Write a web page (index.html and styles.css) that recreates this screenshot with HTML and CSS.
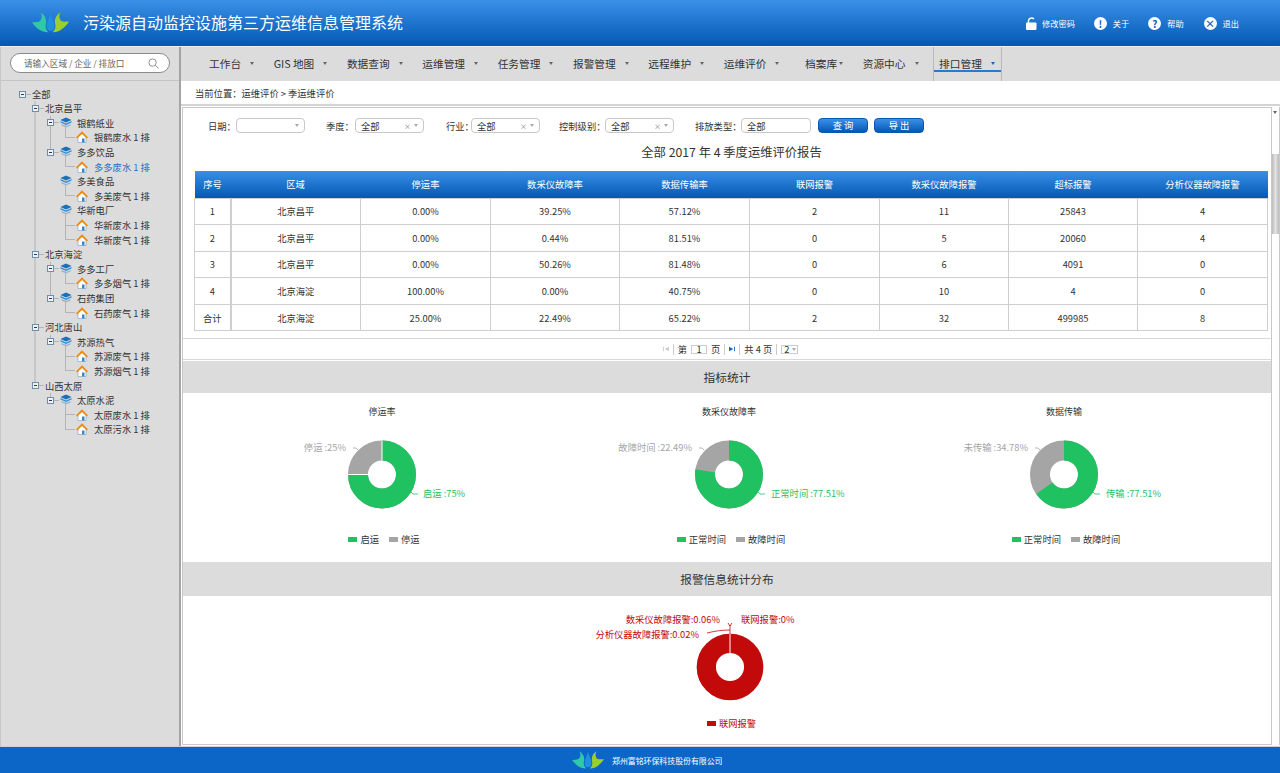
FILE: index.html
```html
<!DOCTYPE html>
<html lang="zh-CN">
<head>
  <meta charset="UTF-8">
  <title>污染源自动监控设施第三方运维信息管理系统</title>
  <link rel="stylesheet" href="styles.css">
</head>
<body>

  <!-- Shared icons -->
  <svg class="defs" width="0" height="0">
    <symbol id="logo" viewBox="0 0 37 20">
      <path fill="#2fc9a6" d="M0 10C4 9.500 7.500 10 9 7C10.500 4 9.500 1.500 8.500 0C13 2.500 15 7 13.800 12C13 15.500 14.500 18 16.500 19.800C9.500 20 4 15.500 0 10Z"/>
      <path fill="#1f8fe0" d="M18.500 0.500C20 6.500 23.500 10.500 22.300 15.500C21.400 19.500 15.600 19.500 14.800 15.500C13.800 10.500 17 6.500 18.500 0.500Z"/>
      <path fill="#9ad02e" d="M37 9C33 9 29.500 10 28 7C26.500 4 27.500 1.500 28.500 0C24 2.500 22 7 23.300 12C24 15.500 22.500 18 20.500 19.800C27.500 20 33 15 37 9Z"/>
    </symbol>
    <symbol id="company" viewBox="0 0 12 12">
      <path fill="#1d6fb8" d="M6 0.500L11.500 3L6 5.500L0.500 3Z"/>
      <path fill="#2f8fd6" d="M0.500 4L6 6.500L11.500 4V5.500L6 8L0.500 5.500Z"/>
      <path fill="#8fb8d8" d="M1.500 7L6 9L10.500 7V8.500L6 10.500L1.500 8.500Z"/>
    </symbol>
    <symbol id="house" viewBox="0 0 12 12">
      <path fill="#fff" stroke="#6f9fc8" stroke-width=".6" d="M2 6V11.500H10V6L6 2.500Z"/>
      <path fill="none" stroke="#f08a10" stroke-width="1.800" d="M0.600 6.800L6 1.500L11.400 6.800"/>
      <rect x="6" y="7.500" width="2.500" height="4" fill="#3d86c6"/>
    </symbol>
  </svg>

  <!-- Header -->
  <header class="top-bar">
    <svg class="logo"><use href="#logo"/></svg>
    <h1>污染源自动监控设施第三方运维信息管理系统</h1>
    <div class="top-links">
      <a class="top-link">
        <svg class="lock" viewBox="0 0 11 13">
          <path fill="none" stroke="#fff" stroke-width="1.400" d="M2.500 6V3.500C2.500 1.500 6 0 8 2"/>
          <rect y="5.500" width="10.500" height="7.500" rx="1" fill="#fff"/>
        </svg>
        修改密码
      </a>
      <a class="top-link"><span class="round-icon">!</span>关于</a>
      <a class="top-link"><span class="round-icon">?</span>帮助</a>
      <a class="top-link"><span class="round-icon">×</span>退出</a>
    </div>
  </header>

  <div class="body-wrap">

    <!-- Left tree -->
    <aside class="side">
      <div class="search-row">
        <div class="search-box">
          <span>请输入区域 / 企业 / 排放口</span>
          <svg viewBox="0 0 12 12" class="search-icon">
            <circle cx="5" cy="5" r="4" fill="none" stroke="#888" stroke-width="1"/>
            <path d="M8 8L11.500 11.500" stroke="#888" stroke-width="1"/>
          </svg>
        </div>
      </div>

      <ul class="tree">
        <li>
          <div class="node"><b class="box"></b><i class="dash"></i>全部</div>
          <ul class="regions">
            <li>
              <div class="node"><b class="box"></b><i class="dash"></i>北京昌平</div>
              <ul class="companies">
                <li>
                  <div class="node"><b class="box"></b><i class="dash"></i><svg class="ico"><use href="#company"/></svg>银鹤纸业</div>
                  <ul class="leaves">
                    <li><div class="node"><i class="dash"></i><svg class="ico"><use href="#house"/></svg>银鹤废水 1 排</div></li>
                  </ul>
                </li>
                <li class="open-end stub">
                  <div class="node"><b class="box"></b><i class="dash"></i><svg class="ico"><use href="#company"/></svg>多多饮品</div>
                  <ul class="leaves">
                    <li><div class="node active"><i class="dash"></i><svg class="ico"><use href="#house"/></svg>多多废水 1 排</div></li>
                  </ul>
                </li>
                <li class="open-end">
                  <div class="node"><b class="box none"></b><i class="dash none"></i><svg class="ico"><use href="#company"/></svg>多美食品</div>
                  <ul class="leaves">
                    <li><div class="node"><i class="dash"></i><svg class="ico"><use href="#house"/></svg>多美废气 1 排</div></li>
                  </ul>
                </li>
                <li class="open-end">
                  <div class="node"><b class="box none"></b><i class="dash none"></i><svg class="ico"><use href="#company"/></svg>华新电厂</div>
                  <ul class="leaves">
                    <li><div class="node"><i class="dash"></i><svg class="ico"><use href="#house"/></svg>华新废水 1 排</div></li>
                    <li><div class="node"><i class="dash"></i><svg class="ico"><use href="#house"/></svg>华新废气 1 排</div></li>
                  </ul>
                </li>
              </ul>
            </li>
            <li>
              <div class="node"><b class="box"></b><i class="dash"></i>北京海淀</div>
              <ul class="companies">
                <li>
                  <div class="node"><b class="box"></b><i class="dash"></i><svg class="ico"><use href="#company"/></svg>多多工厂</div>
                  <ul class="leaves">
                    <li><div class="node"><i class="dash"></i><svg class="ico"><use href="#house"/></svg>多多烟气 1 排</div></li>
                  </ul>
                </li>
                <li class="open-end stub">
                  <div class="node"><b class="box"></b><i class="dash"></i><svg class="ico"><use href="#company"/></svg>石药集团</div>
                  <ul class="leaves">
                    <li><div class="node"><i class="dash"></i><svg class="ico"><use href="#house"/></svg>石药废气 1 排</div></li>
                  </ul>
                </li>
              </ul>
            </li>
            <li>
              <div class="node"><b class="box"></b><i class="dash"></i>河北唐山</div>
              <ul class="companies">
                <li class="open-end stub">
                  <div class="node"><b class="box"></b><i class="dash"></i><svg class="ico"><use href="#company"/></svg>苏源热气</div>
                  <ul class="leaves">
                    <li><div class="node"><i class="dash"></i><svg class="ico"><use href="#house"/></svg>苏源废气 1 排</div></li>
                    <li><div class="node"><i class="dash"></i><svg class="ico"><use href="#house"/></svg>苏源烟气 1 排</div></li>
                  </ul>
                </li>
              </ul>
            </li>
            <li class="open-end">
              <div class="node"><b class="box"></b><i class="dash"></i>山西太原</div>
              <ul class="companies">
                <li class="open-end stub">
                  <div class="node"><b class="box"></b><i class="dash"></i><svg class="ico"><use href="#company"/></svg>太原水泥</div>
                  <ul class="leaves">
                    <li><div class="node"><i class="dash"></i><svg class="ico"><use href="#house"/></svg>太原废水 1 排</div></li>
                    <li><div class="node"><i class="dash"></i><svg class="ico"><use href="#house"/></svg>太原污水 1 排</div></li>
                  </ul>
                </li>
              </ul>
            </li>
          </ul>
        </li>
      </ul>
    </aside>

    <main class="main">

      <!-- Menu -->
      <nav class="menu">
        <a class="menu-item">工作台<i class="caret"></i></a>
        <a class="menu-item">GIS 地图<i class="caret"></i></a>
        <a class="menu-item">数据查询<i class="caret"></i></a>
        <a class="menu-item">运维管理<i class="caret"></i></a>
        <a class="menu-item">任务管理<i class="caret"></i></a>
        <a class="menu-item">报警管理<i class="caret"></i></a>
        <a class="menu-item">远程维护<i class="caret"></i></a>
        <a class="menu-item">运维评价<i class="caret"></i></a>
        <a class="menu-item tight">档案库<i class="caret"></i></a>
        <a class="menu-item">资源中心<i class="caret"></i></a>
        <a class="menu-item active">排口管理<i class="caret"></i></a>
      </nav>

      <div class="crumb">当前位置：运维评价 &gt; 季运维评价</div>

      <div class="frame-wrap">
        <div class="frame">

          <!-- Filters -->
          <div class="filters">
            <label class="f-date">日期：</label>
            <span class="field w-date"><i class="arrow"></i></span>
            <label class="f-quarter">季度：</label>
            <span class="field w-sel">全部<em>×</em><i class="arrow"></i></span>
            <label class="f-trade">行业：</label>
            <span class="field w-sel">全部<em>×</em><i class="arrow"></i></span>
            <label class="f-level">控制级别：</label>
            <span class="field w-sel">全部<em>×</em><i class="arrow"></i></span>
            <label class="f-type">排放类型：</label>
            <span class="field w-input">全部</span>
            <button class="btn">查 询</button>
            <button class="btn">导 出</button>
          </div>

          <h2 class="report-title">全部 2017 年 4 季度运维评价报告</h2>

          <table class="report">
            <thead>
              <tr><th>序号</th><th>区域</th><th>停运率</th><th>数采仪故障率</th><th>数据传输率</th><th>联网报警</th><th>数采仪故障报警</th><th>超标报警</th><th>分析仪器故障报警</th></tr>
            </thead>
            <tbody>
              <tr><td>1</td><td>北京昌平</td><td>0.00%</td><td>39.25%</td><td>57.12%</td><td>2</td><td>11</td><td>25843</td><td>4</td></tr>
              <tr><td>2</td><td>北京昌平</td><td>0.00%</td><td>0.44%</td><td>81.51%</td><td>0</td><td>5</td><td>20060</td><td>4</td></tr>
              <tr><td>3</td><td>北京昌平</td><td>0.00%</td><td>50.26%</td><td>81.48%</td><td>0</td><td>6</td><td>4091</td><td>0</td></tr>
              <tr><td>4</td><td>北京海淀</td><td>100.00%</td><td>0.00%</td><td>40.75%</td><td>0</td><td>10</td><td>4</td><td>0</td></tr>
              <tr><td>合计</td><td>北京海淀</td><td>25.00%</td><td>22.49%</td><td>65.22%</td><td>2</td><td>32</td><td>499985</td><td>8</td></tr>
            </tbody>
          </table>

          <!-- Pagination -->
          <div class="pager">
            <svg class="pg-icon" viewBox="0 0 7 7"><path fill="#ccc" d="M0 1H1V6H0ZM7 1V6L2 3.500Z"/></svg>
            <span class="pg-sep"></span>
            <span>第</span><span class="pg-num">1</span><span>页</span>
            <span class="pg-sep"></span>
            <svg class="pg-icon" viewBox="0 0 7 7"><path fill="#0b66c8" d="M0 1V6L5 3.500ZM6 1H7V6H6Z"/></svg>
            <span class="pg-sep"></span>
            <span>共 4 页</span>
            <span class="pg-sep"></span>
            <span class="pg-select">2<i class="arrow"></i></span>
          </div>

          <div class="band">指标统计</div>

          <div class="charts">
            <div class="chart">
              <div class="chart-title">停运率</div>
              <svg class="donut" viewBox="0 0 280 84">
                <circle class="ring-gray" cx="140" cy="42.500" r="24" pathLength="100"/>
                <circle class="ring-green" cx="140" cy="42.500" r="24" pathLength="100" stroke-dasharray="75 25" transform="rotate(-90 140 42.500)"/>
                <path class="cut" d="M140 8.500V28.500M106 42.500H126"/>
                <path class="lead-gray" d="M111 16H114L116 18"/>
                <path class="lead-green" d="M168 59L171 62H176"/>
                <text class="lbl-gray" x="104" y="19" text-anchor="end">停运 :25%</text>
                <text class="lbl-green" x="181" y="65">启运 :75%</text>
              </svg>
              <div class="legend"><i class="sw green"></i>启运<i class="sw gray"></i>停运</div>
            </div>
            <div class="chart">
              <div class="chart-title">数采仪故障率</div>
              <svg class="donut" viewBox="0 0 280 84">
                <circle class="ring-gray" cx="140" cy="42.500" r="24" pathLength="100"/>
                <circle class="ring-green" cx="140" cy="42.500" r="24" pathLength="100" stroke-dasharray="77.510 22.490" transform="rotate(-90 140 42.500)"/>
                <path class="lead-gray" d="M110 16H113L115 18"/>
                <path class="lead-green" d="M168 59L171 62H176"/>
                <text class="lbl-gray" x="103" y="19" text-anchor="end">故障时间 :22.49%</text>
                <text class="lbl-green" x="182" y="65">正常时间 :77.51%</text>
              </svg>
              <div class="legend"><i class="sw green"></i>正常时间<i class="sw gray"></i>故障时间</div>
            </div>
            <div class="chart">
              <div class="chart-title">数据传输</div>
              <svg class="donut" viewBox="0 0 280 84">
                <circle class="ring-gray" cx="140" cy="42.500" r="24" pathLength="100"/>
                <circle class="ring-green" cx="140" cy="42.500" r="24" pathLength="100" stroke-dasharray="65.220 34.780" transform="rotate(-90 140 42.500)"/>
                <path class="lead-gray" d="M111 16H114L116 18"/>
                <path class="lead-green" d="M168 59L171 62H176"/>
                <text class="lbl-gray" x="104" y="19" text-anchor="end">未传输 :34.78%</text>
                <text class="lbl-green" x="182" y="65">传输 :77.51%</text>
              </svg>
              <div class="legend"><i class="sw green"></i>正常时间<i class="sw gray"></i>故障时间</div>
            </div>
          </div>

          <div class="band tall">报警信息统计分布</div>

          <div class="alarm">
            <svg class="alarm-donut" viewBox="0 0 300 94">
              <circle class="ring-red" cx="150" cy="57" r="23.700"/>
              <path class="cut" d="M150 24V43"/>
              <path class="lead-red" d="M127 23C135 21 142 20 150 20V24M150 20V15M148 13L150 16L152 13"/>
              <text class="lbl-red" x="140" y="13" text-anchor="end">数采仪故障报警:0.06%</text>
              <text class="lbl-red" x="161" y="13">联网报警:0%</text>
              <text class="lbl-red" x="119" y="28" text-anchor="end">分析仪器故障报警:0.02%</text>
            </svg>
            <div class="legend red-legend"><i class="sw red"></i>联网报警</div>
          </div>
        </div>

        <!-- Scrollbar -->
        <div class="scrollbar">
          <i class="sb-arrow"></i>
          <div class="sb-thumb"></div>
        </div>
      </div>
    </main>
  </div>

  <footer class="bottom-bar">
    <svg class="logo small"><use href="#logo"/></svg>
    郑州富铭环保科技股份有限公司
  </footer>

</body>
</html>
```

FILE: styles.css
```css
/* Page */
* {
  box-sizing: border-box;
}

html, body {
  margin: 0;
  height: 100%;
}

body {
  width: 1280px;
  height: 773px;
  display: flex;
  flex-direction: column;
  overflow: hidden;
  font-family: "Noto Sans CJK SC", "Liberation Sans", sans-serif;
  font-size: 9.3px;
  color: #333;
  background: #fff;
}

ul {
  list-style: none;
  margin: 0;
  padding: 0;
}

.defs {
  position: absolute;
}

/* Header */
.top-bar {
  flex: 0 0 46px;
  display: flex;
  align-items: center;
  padding-left: 32px;
  color: #fff;
  background: linear-gradient(#3a90e6, #0358b4);
}

.logo {
  width: 37px;
  height: 21px;
  margin-top: -2px;
}

.top-bar h1 {
  margin: -2px 0 0 14px;
  font-size: 16px;
  font-weight: 400;
}

.top-links {
  display: flex;
  margin-left: auto;
  padding-right: 41px;
  font-size: 8.2px;
}

.top-link {
  display: flex;
  align-items: center;
  margin-left: 19px;
}

.top-link:last-child {
  margin-left: 20px;
}

.lock {
  width: 11px;
  height: 13px;
  margin-right: 5px;
}

.round-icon {
  width: 13px;
  height: 13px;
  margin-right: 6px;
  border-radius: 50%;
  background: #fff;
  color: #0b5fb8;
  font-size: 10px;
  font-weight: 700;
  line-height: 13px;
  text-align: center;
}

/* Layout */
.body-wrap {
  flex: 1;
  display: flex;
  min-height: 0;
  border-top: 1px solid #eee;
}

/* Sidebar */
.side {
  flex: 0 0 181px;
  background: #dcdcdc;
  border-right: 2px solid #a4a4a4;
  border-left: 1px solid #c8c8c8;
}

.search-row {
  height: 34px;
  padding: 6px 0 0 9px;
  border-bottom: 1px solid #c4c4c4;
}

.search-box {
  display: flex;
  align-items: center;
  justify-content: space-between;
  width: 160px;
  height: 20px;
  padding: 0 10px 0 13px;
  border: 1px solid #8a8a8a;
  border-radius: 10px;
  background: #fff;
  color: #666;
  font-size: 8.6px;
}

.search-icon {
  width: 11px;
  height: 11px;
}

/* Tree */
.tree {
  padding: 6px 0 0 17px;
  font-size: 9.3px;
}

.node {
  display: flex;
  align-items: center;
  height: 14.600px;
  white-space: nowrap;
}

.tree > li > .node {
  height: 14px;
}

.node.active {
  color: #1c6fc8;
}

.box {
  flex: none;
  position: relative;
  width: 7px;
  height: 7px;
  margin-left: 1px;
  border: 1px solid #6f8ea8;
  background: #eef2f5;
}

.box::after {
  content: "";
  position: absolute;
  left: 1px;
  top: 2px;
  width: 3px;
  height: 1px;
  background: #335;
}

.box.none {
  border: 0;
  background: none;
}

.box.none::after {
  display: none;
}

.dash {
  flex: none;
  width: 5px;
  margin-right: 1px;
  border-top: 1px solid #b4b4b4;
}

.dash.none {
  border: 0;
}

.ico {
  flex: none;
  width: 12px;
  height: 12px;
  margin-right: 5px;
}

.regions {
  margin-left: 6px;
}

.regions > li {
  margin-left: 10px;
  border-left: 2px solid #c6c6c6;
}

.regions > li > .node .box {
  margin-left: -4px;
}

/* last region: the guide stops at its own row */
.regions > li.open-end {
  border-left-color: transparent;
}

.regions > li.open-end > .node {
  margin-left: -2px;
  padding-left: 2px;
  background: linear-gradient(#c6c6c6, #c6c6c6) 0 0 / 2px 50% no-repeat;
}

.companies {
  margin-left: 14px;
}

.companies > li {
  border-left: 1px solid #b4b4b4;
}

.companies > li.open-end {
  border-left-color: transparent;
}

.companies > li.stub > .node {
  margin-left: -1px;
  padding-left: 1px;
  background: linear-gradient(#b4b4b4, #b4b4b4) 0 0 / 1px 30% no-repeat;
}

.companies > li > .node .box {
  margin-left: -4px;
}

.leaves {
  position: relative;
  margin-left: 14px;
}

.leaves::before {
  content: "";
  position: absolute;
  left: 0;
  top: -5px;
  height: 5px;
  border-left: 1px solid #b4b4b4;
}

.leaves > li {
  border-left: 1px solid #b4b4b4;
}

.leaves > li:last-child {
  border-left-color: transparent;
}

.leaves > li:last-child > .node {
  margin-left: -1px;
  padding-left: 1px;
  background: linear-gradient(#b4b4b4, #b4b4b4) 0 0 / 1px 50% no-repeat;
}

.leaves > li > .node .dash {
  width: 10px;
  margin-left: -1px;
}

.leaves .ico {
  margin-right: 6px;
}

/* Main column */
.main {
  flex: 1;
  min-width: 0;
  display: flex;
  flex-direction: column;
}

/* Menu */
.menu {
  flex: 0 0 34px;
  display: flex;
  align-items: stretch;
  padding: 0 0 2px 28px;
  background: #dcdcdc;
  font-size: 10.700px;
}

.menu-item {
  display: flex;
  align-items: center;
  margin-right: 19.600px;
  white-space: nowrap;
}

.menu-item.tight {
  margin-left: 6px;
}

.menu-item.tight .caret {
  margin-left: 2px;
}

.caret {
  width: 0;
  height: 0;
  margin-left: 9px;
  border: 2.500px solid transparent;
  border-top: 3px solid #666;
  border-bottom: 0;
}

.menu-item.active {
  margin: 0 0 -2px -5px;
  padding: 0 6px 2px 5px;
  border-left: 1px solid #b8b8b8;
  border-right: 1px solid #b8b8b8;
  background: linear-gradient(#2a78d0, #2a78d0) 0 23px / 100% 2px no-repeat;
}

.menu-item.active .caret {
  border-top-color: #1c66c0;
}

/* Breadcrumb */
.crumb {
  flex: 0 0 25px;
  padding: 5px 0 0 14px;
  font-size: 9.3px;
  border-bottom: 2px solid #d4d4d4;
}

/* Content frame */
.frame-wrap {
  flex: 1;
  min-height: 0;
  display: flex;
  padding-top: 1px;
  padding-left: 1px;
}

.frame {
  flex: 1;
  min-width: 0;
  height: 638px;
  border: 1px solid #c8c8c8;
  overflow: hidden;
}

/* Filters */
.filters {
  display: flex;
  align-items: center;
  height: 15px;
  margin-top: 10px;
  padding-left: 25px;
  font-size: 9.3px;
}

.filters label {
  white-space: nowrap;
}

.f-date { width: 28px; }
.f-quarter { width: 29px; margin-left: 21px; }
.f-trade { width: 25px; margin-left: 22px; }
.f-level { width: 46px; margin-left: 19px; }
.f-type { width: 46px; margin-left: 21px; }

.field {
  display: flex;
  align-items: center;
  height: 15px;
  padding-left: 5px;
  border: 1px solid #c8c8c8;
  border-radius: 4px;
  background: #fff;
}

.w-date { width: 69px; justify-content: flex-end; padding-right: 5px; }
.w-sel { width: 69px; }
.w-input { width: 70px; }

.field em {
  margin-left: auto;
  color: #777;
  font-style: normal;
  font-size: 7px;
}

.arrow {
  width: 0;
  height: 0;
  margin: 0 5px 0 3px;
  border: 2.500px solid transparent;
  border-top: 3px solid #aaa;
  border-bottom: 0;
}

.w-date .arrow {
  margin: 0;
}

.btn {
  width: 50px;
  height: 15px;
  margin-left: 7px;
  padding: 0;
  border: 1px solid #0a58ac;
  border-radius: 4px;
  background: linear-gradient(#3a90e6, #0358b4);
  color: #fff;
  font-family: inherit;
  font-size: 9.3px;
  line-height: 13px;
}

.btn + .btn {
  margin-left: 6px;
}

.report-title {
  margin: 10px 0 0;
  height: 28px;
  padding-left: 9px;
  text-align: center;
  font-size: 12.300px;
  font-weight: 400;
  line-height: 18px;
}

/* Table */
.report {
  width: 1073px;
  margin-left: 11px;
  table-layout: fixed;
  border-collapse: collapse;
  text-align: center;
}

.report th {
  width: 130px;
  height: 27px;
  padding: 0;
  color: #fff;
  font-weight: 400;
  background: linear-gradient(#3a90e6, #0358b4);
}

.report th:first-child {
  width: 36px;
}

.report th:nth-child(4),
.report th:nth-child(7),
.report th:nth-child(8) {
  width: 129px;
}

.report td {
  height: 26.600px;
  padding: 0;
  border: 1px solid #cfcfcf;
}

.report td:first-child {
  border-right-width: 2px;
}

/* Pagination */
.pager {
  display: flex;
  align-items: center;
  justify-content: center;
  gap: 4px;
  height: 22px;
  margin-top: 7px;
  padding-left: 7px;
  border-top: 1px solid #d8d8d8;
  border-bottom: 1px solid #d8d8d8;
  font-size: 9.3px;
}

.pg-icon {
  width: 6px;
  height: 6px;
}

.pg-sep {
  width: 1px;
  height: 11px;
  background: #ccc;
}

.pg-num {
  width: 16px;
  height: 9px;
  border: 1px solid #ccc;
  line-height: 7px;
  text-align: center;
}

.pg-select {
  display: flex;
  align-items: center;
  width: 17px;
  height: 9px;
  padding-left: 2px;
  border: 1px solid #ccc;
}

.pg-select .arrow {
  margin: 0 0 0 3px;
}

/* Grey title band */
.band {
  height: 32px;
  margin-top: 1px;
  background: #dcdcdc;
  text-align: center;
  font-size: 11.700px;
  line-height: 32px;
}

.band.tall {
  height: 34px;
  margin-top: 0;
  line-height: 34px;
}

/* Charts */
.charts {
  display: grid;
  grid-template-columns: 398px 296px 374px;
  height: 169px;
}

.chart {
  display: flex;
  flex-direction: column;
  align-items: center;
}

.chart-title {
  height: 28px;
  padding-top: 12px;
  font-size: 9px;
  line-height: 13px;
}

.donut {
  flex: none;
  width: 280px;
  height: 84px;
  margin-top: 11px;
}

.ring-gray,
.ring-green,
.ring-red {
  fill: none;
  stroke-width: 20;
}

.ring-gray { stroke: #a5a5a5; }
.ring-green { stroke: #1fc160; }
.ring-red { stroke: #c20a0a; stroke-width: 19.300; }

.cut {
  fill: none;
  stroke: #fff;
  stroke-width: 1;
}

.lead-gray,
.lead-green,
.lead-red {
  fill: none;
  stroke-width: .8;
}

.lead-gray { stroke: #a5a5a5; }
.lead-green { stroke: #1fc160; }
.lead-red { stroke: #c20a0a; }

.donut text,
.alarm-donut text {
  font-size: 9.3px;
}

.lbl-gray { fill: #a5a5a5; }
.lbl-green { fill: #1fc160; }
.lbl-red { fill: #c20a0a; }

.legend {
  display: flex;
  align-items: center;
  margin-top: 16px;
  padding-left: 4px;
  line-height: 14px;
  font-size: 9.3px;
}

.sw {
  width: 9px;
  height: 5px;
  margin-right: 3px;
}

.sw.gray {
  margin-left: 10px;
}

.sw.green { background: #1fc160; }
.sw.gray { background: #a5a5a5; }
.sw.red { background: #c20a0a; }

/* Alarm chart */
.alarm {
  display: flex;
  flex-direction: column;
  align-items: center;
  padding-left: 5px;
}

.alarm-donut {
  flex: none;
  width: 300px;
  height: 94px;
  margin-top: 14px;
}

.red-legend {
  margin-top: 12px;
  color: #c20a0a;
}

/* Scrollbar */
.scrollbar {
  flex: 0 0 8px;
  height: 638px;
  border-right: 1px solid #c8c8c8;
  background: #fff;
}

.sb-arrow {
  display: block;
  width: 0;
  height: 0;
  margin: 4px 0 0 1px;
  border: 2.500px solid transparent;
  border-top: 3px solid #666;
  border-bottom: 0;
}

.sb-thumb {
  height: 80px;
  margin-top: 40px;
  background: linear-gradient(90deg, #bbb, #e4e4e4, #bbb);
}

/* Footer */
.bottom-bar {
  flex: 0 0 27px;
  display: flex;
  align-items: center;
  padding-left: 572px;
  background: #0b66c8;
  border-top: 1px solid #d0d0d0;
  color: #fff;
  font-size: 7.900px;
}

.logo.small {
  width: 32px;
  height: 18px;
  margin: 0 8px 0 0;
}
```
